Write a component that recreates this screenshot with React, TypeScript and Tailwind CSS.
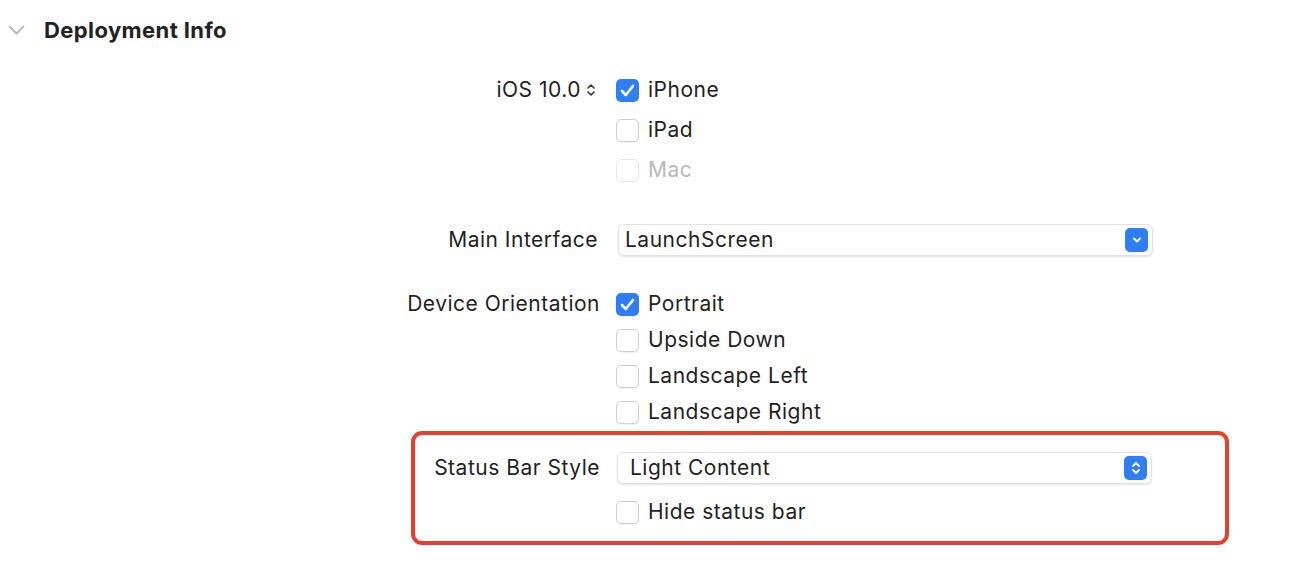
const font = { fontFamily: 'Inter, "Liberation Sans", sans-serif' };

function Checkbox({ checked = false, disabled = false }: { checked?: boolean; disabled?: boolean }) {
    if (checked) {
        return (
            <div className="w-[23px] h-[23px] rounded-[5px] bg-[#2f7ef6] flex items-center justify-center shrink-0">
                <svg width="15" height="13" viewBox="0 0 15 13" fill="none">
                    <path d="M2 7 L5.8 11 L13 2" stroke="white" strokeWidth="2.6" strokeLinecap="round" strokeLinejoin="round" />
                </svg>
            </div>
        );
    }
    return (
        <div
            className={
                disabled
                    ? 'w-[23px] h-[23px] rounded-[5px] border border-[#e6e6e6] bg-white shrink-0'
                    : 'w-[23px] h-[23px] rounded-[5px] border border-[#cfcfcf] bg-white shadow-[0_1px_1px_rgba(0,0,0,0.06)] shrink-0'
            }
        />
    );
}

function CheckRow({ label, checked, disabled, h = 'h-[40px]' }: { label: string; checked?: boolean; disabled?: boolean; h?: string }) {
    return (
        <div className={`flex items-center ${h}`}>
            <Checkbox checked={checked} disabled={disabled} />
            <span className={disabled ? 'ml-[9px] text-[#b9b9b9]' : 'ml-[9px] text-[#1f1f1f]'}>{label}</span>
        </div>
    );
}

function Popup({ value, updown = false, pl = 'pl-[6px]' }: { value: string; updown?: boolean; pl?: string }) {
    return (
        <div className={`w-[535px] h-[32px] rounded-[6px] bg-white border border-[#e2e2e2] shadow-[0_1px_2px_rgba(0,0,0,0.12)] flex items-center justify-between ${pl} pr-[4px]`}>
            <span className="text-[#1f1f1f]">{value}</span>
            <div className="w-[23px] h-[24px] rounded-[5px] bg-[#2f7ef6] flex items-center justify-center">
                {updown ? (
                    <svg width="10" height="14" viewBox="0 0 10 14" fill="none">
                        <path d="M2 5 L5 2 L8 5" stroke="white" strokeWidth="1.8" strokeLinecap="round" strokeLinejoin="round" />
                        <path d="M2 9 L5 12 L8 9" stroke="white" strokeWidth="1.8" strokeLinecap="round" strokeLinejoin="round" />
                    </svg>
                ) : (
                    <svg width="10" height="8" viewBox="0 0 10 8" fill="none">
                        <path d="M2 2.5 L5 5.5 L8 2.5" stroke="white" strokeWidth="1.9" strokeLinecap="round" strokeLinejoin="round" />
                    </svg>
                )}
            </div>
        </div>
    );
}

export default function App() {
    return (
        <div className="w-[1296px] h-[562px] bg-white text-[21px] tracking-[0.5px] text-[#1f1f1f] overflow-hidden" style={font}>
            {/* Section header */}
            <div className="h-[60px] flex items-center">
                <svg className="ml-[8px]" width="17" height="10" viewBox="0 0 17 10" fill="none">
                    <path d="M1.5 1.5 L8.5 8.5 L15.5 1.5" stroke="#b8b8b8" strokeWidth="1.8" strokeLinecap="round" strokeLinejoin="round" />
                </svg>
                <span className="ml-[19px] text-[22px] font-bold tracking-[0.4px] text-[#222]">Deployment Info</span>
            </div>

            {/* Deployment target */}
            <div className="mt-[10px] flex">
                <div className="w-[600px] h-[40px] flex items-center justify-end pr-[4px]">
                    <span>iOS 10.0</span>
                    <svg className="ml-[5px]" width="10" height="14" viewBox="0 0 10 14" fill="none">
                        <path d="M2 5 L5 2 L8 5" stroke="#333" strokeWidth="1.6" strokeLinecap="round" strokeLinejoin="round" />
                        <path d="M2 9 L5 12 L8 9" stroke="#333" strokeWidth="1.6" strokeLinecap="round" strokeLinejoin="round" />
                    </svg>
                </div>
                <div className="ml-[16px] flex flex-col">
                    <CheckRow label="iPhone" checked />
                    <CheckRow label="iPad" />
                    <CheckRow label="Mac" disabled />
                </div>
            </div>

            {/* Main interface */}
            <div className="mt-[30px] flex items-center h-[40px]">
                <div className="w-[600px] text-right pr-[2px]">Main Interface</div>
                <div className="ml-[18px]">
                    <Popup value="LaunchScreen" />
                </div>
            </div>

            {/* Device orientation */}
            <div className="mt-[26px] flex">
                <div className="w-[600px] h-[36px] flex items-center justify-end">Device Orientation</div>
                <div className="ml-[16px] flex flex-col">
                    <CheckRow label="Portrait" checked h="h-[36px]" />
                    <CheckRow label="Upside Down" h="h-[36px]" />
                    <CheckRow label="Landscape Left" h="h-[36px]" />
                    <CheckRow label="Landscape Right" h="h-[36px]" />
                </div>
            </div>

            {/* Status bar (highlighted) */}
            <div className="mt-[1px] ml-[411px] w-[818px] h-[114px] border-[4px] border-[#e5402b] rounded-[11px] pt-[17px]">
                <div className="flex items-center h-[32px]">
                    <div className="w-[185px] text-right">Status Bar Style</div>
                    <div className="ml-[17px]">
                        <Popup value="Light Content" updown pl="pl-[12px]" />
                    </div>
                </div>
                <div className="flex mt-[10px]">
                    <div className="w-[185px]" />
                    <div className="ml-[16px]">
                        <CheckRow label="Hide status bar" h="h-[36px]" />
                    </div>
                </div>
            </div>
        </div>
    );
}
